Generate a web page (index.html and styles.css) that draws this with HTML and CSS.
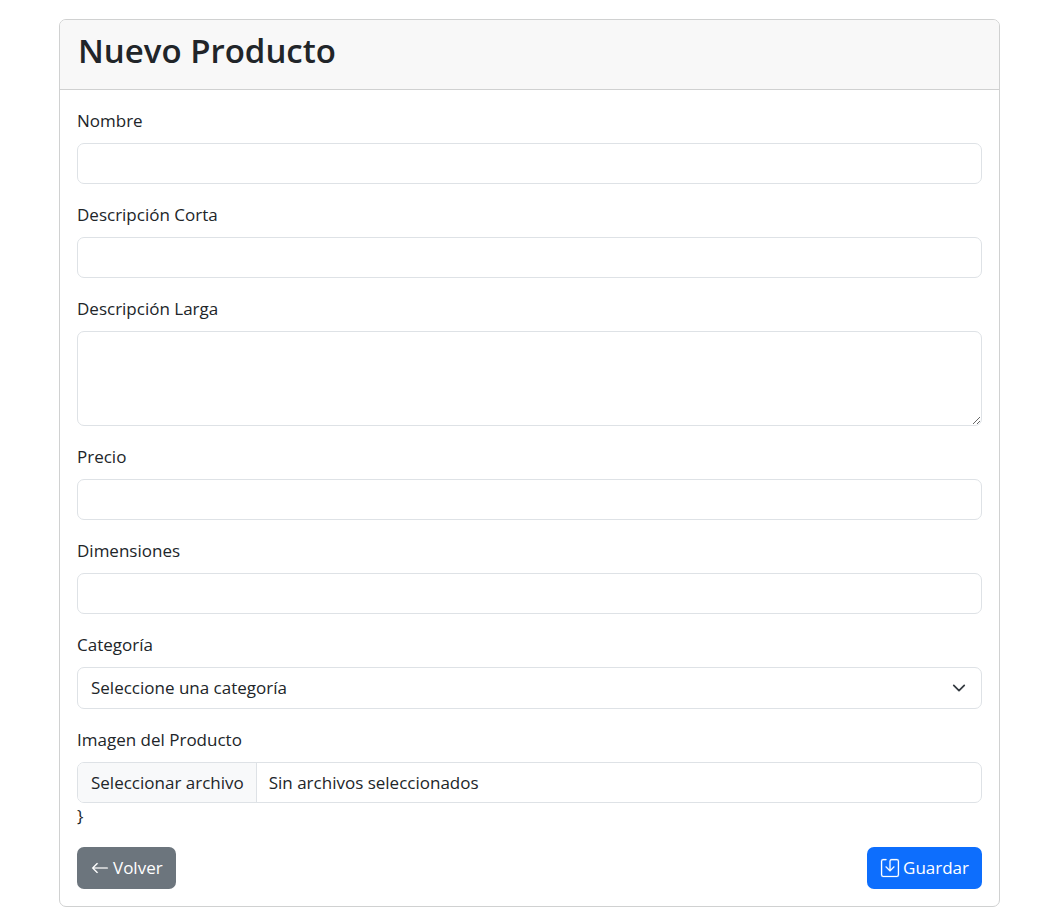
FILE: index.html
```html
<!DOCTYPE html>
<html lang="es">
<head>
<meta charset="utf-8">
<meta name="viewport" content="width=device-width, initial-scale=1">
<title>Nuevo Producto</title>
<link rel="stylesheet" href="styles.css">
</head>
<body>
<main class="card">
  <header class="card-header"><h1 class="title">Nuevo Producto</h1></header>
  <form class="card-body">
    <div class="field">
      <label class="label" for="nombre">Nombre</label>
      <input class="control" type="text" id="nombre">
    </div>
    <div class="field">
      <label class="label" for="corta">Descripción Corta</label>
      <input class="control" type="text" id="corta">
    </div>
    <div class="field">
      <label class="label" for="larga">Descripción Larga</label>
      <textarea class="control control-area" id="larga"></textarea>
    </div>
    <div class="field">
      <label class="label" for="precio">Precio</label>
      <input class="control" type="text" id="precio">
    </div>
    <div class="field">
      <label class="label" for="dimensiones">Dimensiones</label>
      <input class="control" type="text" id="dimensiones">
    </div>
    <div class="field">
      <label class="label" for="categoria">Categoría</label>
      <div class="select-wrap">
        <select class="control control-select" id="categoria"><option>Seleccione una categoría</option></select>
        <svg class="chevron" viewBox="0 0 16 16" aria-hidden="true"><path d="m2 5 6 6 6-6"/></svg>
      </div>
    </div>
    <div class="field-file">
      <label class="label" for="imagen">Imagen del Producto</label>
      <div class="control file">
        <span class="file-button">Seleccionar archivo</span>
        <span class="file-name">Sin archivos seleccionados</span>
        <input class="file-input" type="file" id="imagen">
      </div>
    </div>
    <p class="stray">}</p>
    <div class="actions">
      <a class="btn btn-secondary" href="#">
        <svg class="icon" viewBox="0 0 16 16" aria-hidden="true"><path fill-rule="evenodd" d="M15 8a.5.5 0 0 0-.5-.5H2.707l3.147-3.146a.5.5 0 1 0-.708-.708l-4 4a.5.5 0 0 0 0 .708l4 4a.5.5 0 0 0 .708-.708L2.707 8.500H14.500A.5.5 0 0 0 15 8"/></svg>
        Volver
      </a>
      <button class="btn btn-primary" type="submit">
        <svg class="icon icon-save" viewBox="0 0 16 16" aria-hidden="true"><path d="M2 1a1 1 0 0 0-1 1v12a1 1 0 0 0 1 1h12a1 1 0 0 0 1-1V2a1 1 0 0 0-1-1H9.500a1 1 0 0 0-1 1v7.293l2.646-2.647a.5.5 0 0 1 .708.708l-3.500 3.500a.5.5 0 0 1-.708 0l-3.500-3.500a.5.5 0 1 1 .708-.708L7.500 9.293V2a2 2 0 0 1 2-2H14a2 2 0 0 1 2 2v12a2 2 0 0 1-2 2H2a2 2 0 0 1-2-2V2a2 2 0 0 1 2-2h2.500a.5.5 0 0 1 0 1z"/></svg>
        Guardar
      </button>
    </div>
  </form>
</main>
</body>
</html>
```
FILE: styles.css
```css
*, *::before, *::after { box-sizing: border-box; }
body {
  margin: 0;
  padding: 19px 52px 0 59px;
  background: #fff;
  color: #212529;
  font: 400 17px/26px "Segoe UI", "Open Sans", "Noto Sans", sans-serif;
}
.card { border: 1px solid #d0d1d1; border-radius: 7px; overflow: hidden; }
.card-header { padding: 10px 18px 17px; background: #f8f8f8; border-bottom: 1px solid #d0d1d1; }
.title { margin: 0; font-size: 33px; line-height: 42px; font-weight: 600; }
.card-body { padding: 18px 17px 17px; }
.field { margin-bottom: 18px; }
.label { display: block; width: fit-content; margin-bottom: 9px; }
.control {
  display: block;
  width: 100%;
  height: 41px;
  margin: 0;
  padding: 0 13px;
  border: 1px solid #dee2e6;
  border-radius: 7px;
  background: #fff;
  color: inherit;
  font: inherit;
}
.control-area { height: 95px; padding: 7px 13px; resize: vertical; }
.select-wrap { position: relative; }
.control-select { height: 42px; appearance: none; padding-right: 40px; }
.chevron {
  position: absolute;
  right: 16px;
  top: 14px;
  width: 14px;
  height: 14px;
  fill: none;
  stroke: #343a40;
  stroke-width: 2;
  stroke-linecap: round;
  stroke-linejoin: round;
  pointer-events: none;
}
.file { position: relative; display: flex; padding: 0; overflow: hidden; line-height: 39px; }
.file-button { padding: 0 12px 0 13px; background: #f8f9fa; border-right: 1px solid #dee2e6; }
.file-name { padding: 0 12px; }
.file-input { position: absolute; inset: 0; width: 100%; height: 100%; opacity: 0; }
.stray { margin: 0 0 18px; }
.actions { display: flex; justify-content: space-between; }
.btn {
  display: flex;
  align-items: center;
  gap: 4px;
  height: 42px;
  padding: 0 13px 0 14px;
  border: 0;
  border-radius: 7px;
  color: #fff;
  font: inherit;
  text-decoration: none;
  cursor: pointer;
}
.btn-secondary { background: #6c757d; }
.btn-primary { background: #0d6efd; }
.icon { width: 18px; height: 18px; fill: currentColor; stroke: currentColor; stroke-width: 0.2; overflow: visible; }
```
